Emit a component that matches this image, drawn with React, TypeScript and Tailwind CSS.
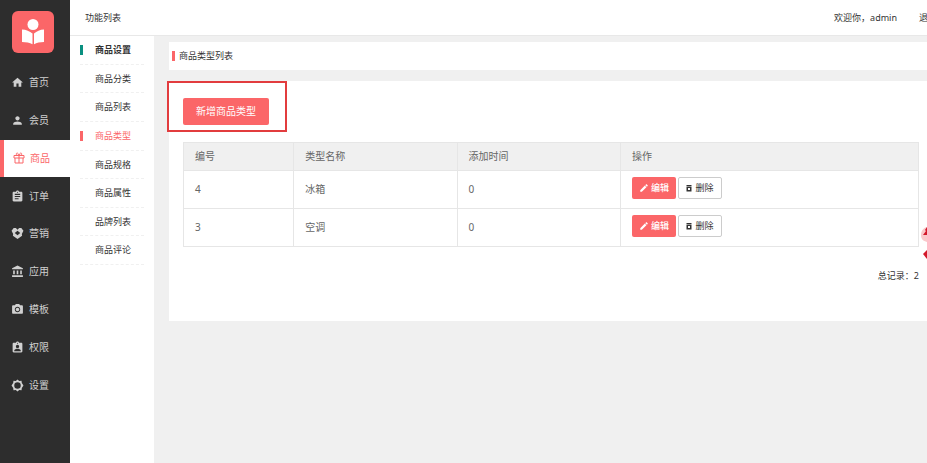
import type { IconType } from "react-icons";
import {
  MdAccountBalance,
  MdAssignment,
  MdAssignmentInd,
  MdCreate,
  MdHome,
  MdLocalSee,
  MdPerson,
} from "react-icons/md";
import React from "react";
import clsx from "clsx";

interface NavItem {
  label: string;
  icon: IconType | (() => React.ReactElement);
}

function GearIcon() {
  return (
    <svg width="1em" height="1em" viewBox="0 0 24 24" fill="currentColor">
      <path
        fillRule="evenodd"
        d="M12 1l3.200 2.600 4.200-.2.600 4.200L23 12l-3 4.400-.6 4.200-4.200-.2L12 23l-3.200-2.600-4.200.2-.6-4.200L1 12l3-4.400.6-4.200 4.200.2zM12 6a6 6 0 100 12 6 6 0 000-12z"
      />
    </svg>
  );
}

function GiftIcon() {
  return (
    <svg
      width="1em"
      height="1em"
      viewBox="0 0 24 24"
      fill="none"
      stroke="currentColor"
      strokeWidth="2"
    >
      <path d="M2 7h20v5H2zM4 12v10h16V12M12 7v15M12 7C8 7 6.500 5.500 6.500 4S8 1.800 9.300 2.500 12 5 12 7c0-2 1.400-3.800 2.700-4.500S17.500 2.500 17.500 4 16 7 12 7z" />
    </svg>
  );
}

function MarketingIcon() {
  return (
    <svg width="1em" height="1em" viewBox="0 0 24 24" fill="currentColor">
      <path
        fillRule="evenodd"
        d="M1 7l4-5h4l3 3 3-3h4l4 5-3 6 .5 3L12 22l-8.500-6L4 13zM12 7l-5 4 5 4 5-4z"
      />
    </svg>
  );
}

function TrashIcon() {
  return (
    <svg width="6" height="8" viewBox="0 0 12 16" fill="currentColor">
      <path
        fillRule="evenodd"
        d="M1 2h10v3H1zM1 6h10v9H1zM4 8v4h4V8z"
      />
    </svg>
  );
}

const navItems: NavItem[] = [
  { label: "首页", icon: MdHome },
  { label: "会员", icon: MdPerson },
  { label: "商品", icon: GiftIcon },
  { label: "订单", icon: MdAssignment },
  { label: "营销", icon: MarketingIcon },
  { label: "应用", icon: MdAccountBalance },
  { label: "模板", icon: MdLocalSee },
  { label: "权限", icon: MdAssignmentInd },
  { label: "设置", icon: GearIcon },
];

const subItems = [
  "商品分类",
  "商品列表",
  "商品类型",
  "商品规格",
  "商品属性",
  "品牌列表",
  "商品评论",
];

const rows = [
  { id: 4, name: "冰箱", time: 0 },
  { id: 3, name: "空调", time: 0 },
];

function Logo() {
  return (
    <svg
      className="mt-[11px] ml-3 block h-[42px] w-[42px] shrink-0"
      viewBox="0 0 42 42"
    >
      <rect width="42" height="42" rx="6" fill="#fb6668" />
      <g fill="#fff">
        <circle cx="21" cy="13.5" r="5.500" />
        <path d="M10 18.500c4 .2 7.800 1.600 10.500 4v10.800c-2.700-1.500-6.500-2-10.500-2.200zM32 18.500c-4 .2-7.300 1.600-10 4v10.800c2.700-1.500 6-2 10-2.200z" />
      </g>
    </svg>
  );
}

function Sidebar() {
  return (
    <nav className="flex w-[70px] shrink-0 flex-col bg-[#2d2d2d]">
      <Logo />
      <ul className="mt-[11px] grid h-[340px] auto-rows-fr">
        {navItems.map(({ label, icon: Icon }) => {
          const active = label === "商品";
          return (
            <li key={label}>
              <a
                href="#"
                className={clsx(
                  "flex h-full items-center text-[10px]",
                  active
                    ? "border-l-4 border-[#fb6668] bg-white pl-[9px] text-[#fb6668]"
                    : "pl-[11px] text-[#d0d0d0]"
                )}
              >
                <span
                  className={clsx(
                    "mr-[5px]",
                    active ? "text-[12px]" : "text-[13px]"
                  )}
                >
                  <Icon />
                </span>
                {label}
              </a>
            </li>
          );
        })}
      </ul>
    </nav>
  );
}

function SubMenu() {
  return (
    <ul className="grid h-[229px] auto-rows-fr px-[10px]">
      <li className="flex items-center border-b border-dashed border-[#f0f0f0] font-bold text-[#333]">
        <span className="mr-3 h-[10px] w-[3px] bg-[#0a9080]" />
        商品设置
      </li>
      {subItems.map((label) => {
        const active = label === "商品类型";
        return (
          <li key={label} className="border-b border-dashed border-[#f0f0f0]">
            <a
              href="#"
              className={clsx(
                "flex h-full items-center",
                active ? "text-[#fb6668]" : "text-[#333]"
              )}
            >
              <span
                className={clsx(
                  "mr-3 h-[10px] w-[3px]",
                  active && "bg-[#fb6668]"
                )}
              />
              {label}
            </a>
          </li>
        );
      })}
    </ul>
  );
}

function TypeTable() {
  const cell = "border border-[#e6e6e6] px-[11px]";
  return (
    <table className="w-full table-fixed border-collapse text-left text-[10px] text-[#666]">
      <thead className="bg-[#f0f0f0]">
        <tr className="h-7">
          <th className={clsx(cell, "w-[15%] font-normal")}>编号</th>
          <th className={clsx(cell, "w-2/9 font-normal")}>类型名称</th>
          <th className={clsx(cell, "w-2/9 font-normal")}>添加时间</th>
          <th className={clsx(cell, "font-normal")}>操作</th>
        </tr>
      </thead>
      <tbody>
        {rows.map((row) => (
          <tr key={row.id} className="h-[38px]">
            <td className={cell}>{row.id}</td>
            <td className={cell}>{row.name}</td>
            <td className={cell}>{row.time}</td>
            <td className={clsx(cell, "align-top")}>
              <div className="mt-[6px] flex gap-[2px] text-[9px]">
                <button
                  type="button"
                  className="flex h-[22px] w-[44px] items-center justify-center gap-[2px] rounded-xs bg-[#fb6668] font-medium text-white"
                >
                  <MdCreate className="text-[10px]" />
                  编辑
                </button>
                <button
                  type="button"
                  className="flex h-[22px] w-[44px] items-center justify-center gap-[3px] rounded-xs border border-[#ccc] bg-white text-[#333]"
                >
                  <TrashIcon />
                  删除
                </button>
              </div>
            </td>
          </tr>
        ))}
      </tbody>
    </table>
  );
}

export default function App() {
  return (
    <div className="relative flex min-h-screen overflow-hidden bg-[#f0f0f0] font-['Noto_Sans','Noto_Sans_CJK_SC',sans-serif] text-[9px] text-[#333]">
      <Sidebar />
      <div className="flex min-w-0 flex-1 flex-col">
        <header className="flex h-9 items-center overflow-hidden border-b border-[#e8e8e8] bg-white pl-[15px] whitespace-nowrap">
          <span>功能列表</span>
          <span className="mr-[22px] ml-auto">欢迎你，admin</span>
          <a href="#" className="-mr-[10px]">
            退出
          </a>
        </header>
        <div className="flex flex-1">
          <aside className="w-[84px] shrink-0 bg-white">
            <SubMenu />
          </aside>
          <main className="min-w-0 flex-1 pt-[6px] pl-[15px]">
            <h1 className="flex h-7 items-center bg-white pl-[3px]">
              <span className="mr-1 h-[10px] w-[3px] bg-[#fb6668]" />
              商品类型列表
            </h1>
            <section className="relative mt-[11px] bg-white pt-[17px] pr-2 pb-[38px] pl-[14px]">
              <div className="absolute top-0 -left-[2px] h-[51px] w-[120px] border-2 border-[#e23c3e]" />
              <button
                type="button"
                className="mb-[17px] block h-[27px] w-[86px] rounded-xs bg-[#fb6668] text-[10px] text-white"
              >
                新增商品类型
              </button>
              <TypeTable />
              <p className="mt-[22px] text-right">总记录：2</p>
            </section>
          </main>
        </div>
      </div>
      <svg
        className="absolute top-[225px] right-0 h-9 w-[7px]"
        viewBox="0 0 7 36"
      >
        <path d="M7 2C3 3 1 6 1 10s2 6 6 7z" fill="#f9c9cb" />
        <path d="M7 2L5 5l1 1-3 4h4z" fill="#d3182a" />
        <path d="M7 25l-4 4 4 5z" fill="#d3182a" />
      </svg>
    </div>
  );
}
